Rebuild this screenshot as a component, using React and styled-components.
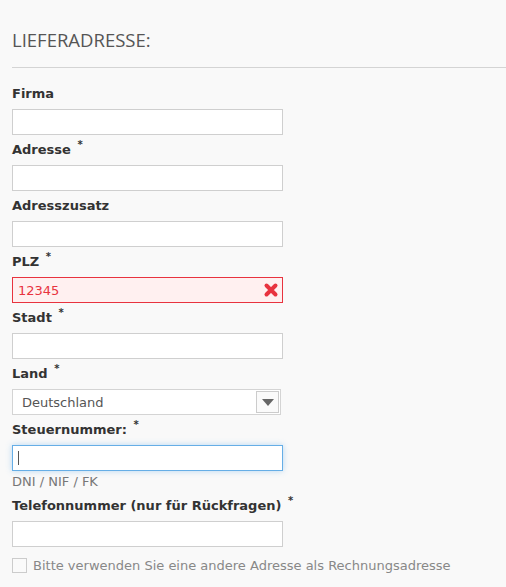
import React from "react";
import styled, { createGlobalStyle } from "styled-components";

const GlobalStyle = createGlobalStyle`
  html, body {
    margin: 0;
    padding: 0;
    background: #f9f9f9;
  }
  body {
    font-family: "DejaVu Sans", sans-serif;
    color: #333;
  }
`;

export default function App() {
  return (
    <Page>
      <GlobalStyle />
      <Heading>LIEFERADRESSE:</Heading>
      <Divider />
      <Form>
        <Field>
          <Label>Firma</Label>
          <TextInput type="text" />
        </Field>
        <Field>
          <Label>
            Adresse <Req>*</Req>
          </Label>
          <TextInput type="text" />
        </Field>
        <Field>
          <Label>Adresszusatz</Label>
          <TextInput type="text" />
        </Field>
        <Field>
          <Label>
            PLZ <Req>*</Req>
          </Label>
          <InputWrap>
            <TextInput type="text" $error defaultValue="12345" />
            <ErrorIcon viewBox="0 0 16 16">
              <path
                d="M3.5 3.5 L12.5 12.5 M12.5 3.5 L3.5 12.5"
                stroke="#e8333f"
                strokeWidth="4"
                strokeLinecap="round"
              />
            </ErrorIcon>
          </InputWrap>
        </Field>
        <Field>
          <Label>
            Stadt <Req>*</Req>
          </Label>
          <TextInput type="text" />
        </Field>
        <Field>
          <Label>
            Land <Req>*</Req>
          </Label>
          <Select>
            <SelectValue>Deutschland</SelectValue>
            <SelectButton>
              <svg width="12" height="7" viewBox="0 0 12 7">
                <path d="M0 0 H12 L6 7 Z" fill="#666" />
              </svg>
            </SelectButton>
          </Select>
        </Field>
        <Field>
          <Label>
            Steuernummer: <Req>*</Req>
          </Label>
          <InputWrap>
            <TextInput type="text" $focus />
            <Caret />
          </InputWrap>
          <Help>DNI / NIF / FK</Help>
        </Field>
        <Field>
          <Label>
            Telefonnummer (nur für Rückfragen) <Req>*</Req>
          </Label>
          <TextInput type="text" />
        </Field>
        <CheckRow>
          <Box />
          <CheckText>Bitte verwenden Sie eine andere Adresse als Rechnungsadresse</CheckText>
        </CheckRow>
      </Form>
    </Page>
  );
}

const Page = styled.div`
  width: 506px;
  height: 587px;
  overflow: hidden;
  background: #f9f9f9;
`;

const Heading = styled.h2`
  margin: 0;
  padding: 28px 12px 0;
  height: 39px;
  font-family: "Open Sans", sans-serif;
  font-weight: 400;
  font-size: 18.5px;
  line-height: 24px;
  color: #555;
`;

const Divider = styled.hr`
  margin: 0 0 0 12px;
  border: 0;
  border-top: 1px solid #d4d4d4;
  height: 0;
`;

const Form = styled.div`
  display: flex;
  flex-direction: column;
  padding: 17px 12px 0;
`;

const Field = styled.div`
  display: flex;
  flex-direction: column;
  margin-bottom: 6px;
`;

const Label = styled.label`
  font-size: 13px;
  font-weight: 700;
  line-height: 18px;
  color: #333;
  margin-bottom: 6px;
  height: 18px;
  white-space: nowrap;
`;

const Req = styled.sup`
  font-size: 10px;
  font-weight: 700;
  margin-left: 2px;
  line-height: 0;
  position: relative;
  top: -1px;
`;

const InputWrap = styled.div`
  position: relative;
  width: 271px;
`;

const TextInput = styled.input`
  box-sizing: border-box;
  width: 271px;
  height: 26px;
  margin: 0;
  padding: 0 5px;
  font-family: "DejaVu Sans", sans-serif;
  font-size: 13px;
  color: ${(p) => (p.$error ? "#e8333f" : "#333")};
  background: ${(p) => (p.$error ? "#fff0f0" : "#fff")};
  border: 1px solid
    ${(p) => (p.$error ? "#e8333f" : p.$focus ? "#66aee6" : "#cfcfcf")};
  box-shadow: ${(p) => (p.$focus ? "0 0 6px rgba(102,175,233,0.45)" : "none")};
  border-radius: 0;
  outline: none;
`;

const ErrorIcon = styled.svg`
  position: absolute;
  right: 4px;
  top: 5px;
  width: 16px;
  height: 16px;
`;

const Caret = styled.span`
  position: absolute;
  left: 6px;
  top: 6px;
  width: 1px;
  height: 14px;
  background: #555;
`;

const Select = styled.div`
  box-sizing: border-box;
  width: 269px;
  height: 26px;
  display: flex;
  align-items: center;
  justify-content: space-between;
  background: #fff;
  border: 1px solid #d4d4d4;
  padding: 0 1px 0 9px;
`;

const SelectValue = styled.span`
  font-size: 13px;
  color: #555;
`;

const SelectButton = styled.span`
  box-sizing: border-box;
  width: 23px;
  height: 22px;
  display: flex;
  align-items: center;
  justify-content: center;
  border: 1px solid #ccc;
  background: #fafafa;
`;

const Help = styled.div`
  font-size: 13px;
  line-height: 19px;
  color: #777;
  margin-top: 1px;
`;

const CheckRow = styled.div`
  display: flex;
  align-items: center;
  gap: 6px;
  height: 18px;
  margin-top: 3px;
`;

const Box = styled.span`
  box-sizing: border-box;
  width: 15px;
  height: 15px;
  border: 1px solid #ccc;
  background: #fafafa;
`;

const CheckText = styled.span`
  font-size: 13px;
  color: #888;
`;
